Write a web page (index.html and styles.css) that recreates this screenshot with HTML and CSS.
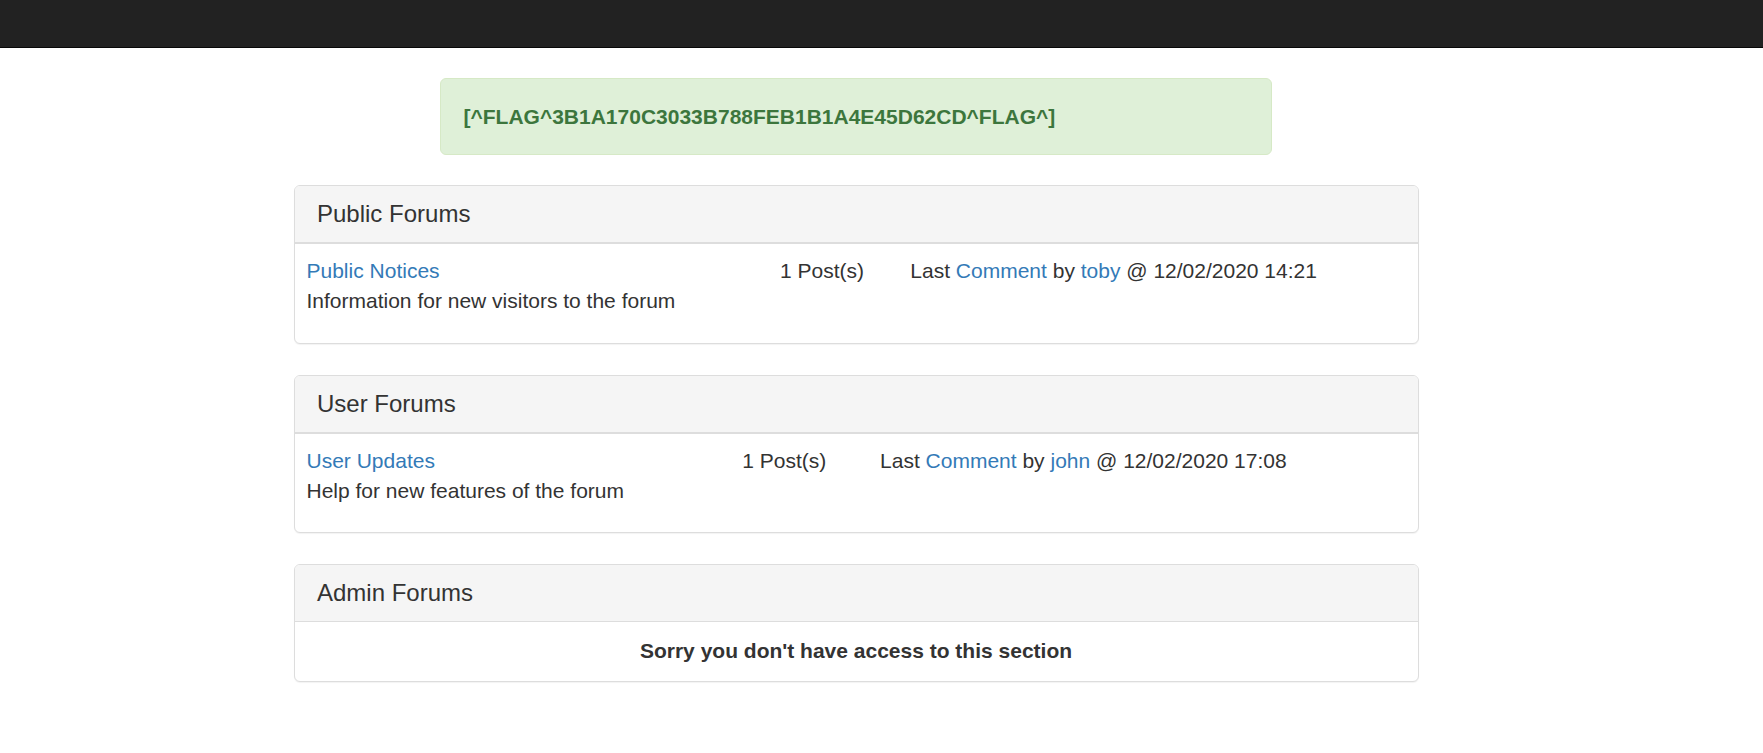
FILE: index.html
```html
<!DOCTYPE html>
<html lang="en">
<head>
<meta charset="utf-8">
<title>Forums</title>
<link rel="stylesheet" href="styles.css">
</head>
<body>
<nav class="navbar"></nav>
<main class="main">
  <div class="container">
    <div class="alert">[^FLAG^3B1A170C3033B788FEB1B1A4E45D62CD^FLAG^]</div>

    <section class="panel">
      <div class="panel-heading"><h3 class="panel-title">Public Forums</h3></div>
      <table class="forum-table">
        <tr>
          <td><a href="#">Public Notices</a><p class="desc">Information for new visitors to the forum</p></td>
          <td>1 Post(s)</td>
          <td>Last <a href="#">Comment</a> by <a href="#">toby</a> @ 12/02/2020 14:21</td>
        </tr>
      </table>
    </section>

    <section class="panel">
      <div class="panel-heading"><h3 class="panel-title">User Forums</h3></div>
      <table class="forum-table">
        <tr>
          <td><a href="#">User Updates</a><p class="desc">Help for new features of the forum</p></td>
          <td>1 Post(s)</td>
          <td>Last <a href="#">Comment</a> by <a href="#">john</a> @ 12/02/2020 17:08</td>
        </tr>
      </table>
    </section>

    <section class="panel">
      <div class="panel-heading"><h3 class="panel-title">Admin Forums</h3></div>
      <div class="panel-body denied">Sorry you don't have access to this section</div>
    </section>
  </div>
</main>
</body>
</html>
```

FILE: styles.css
```css
* { box-sizing: border-box; }

html, body {
  margin: 0;
  padding: 0;
  background: #fff;
}

body {
  font-family: "Liberation Sans", Arial, Helvetica, sans-serif;
  font-size: 21px;
  line-height: 30px;
  color: #333;
}

a {
  color: #337ab7;
  text-decoration: none;
}

.navbar {
  height: 48px;
  background: #222;
  border-bottom: 1px solid #080808;
}

.main {
  width: 1712px;
  padding-top: 30px;
}

.container {
  width: 1125px;
  margin: 0 auto;
}

.alert {
  width: 832px;
  margin: 0 auto 30px;
  padding: 22.5px;
  background: #dff0d8;
  border: 1px solid #d6e9c6;
  border-radius: 6px;
  color: #3c763d;
  font-weight: bold;
}

.panel {
  background: #fff;
  border: 1px solid #ddd;
  border-radius: 6px;
  box-shadow: 0 1px 1px rgba(0, 0, 0, 0.05);
  margin-bottom: 31px;
  overflow: hidden;
}

.panel-heading {
  background: #f5f5f5;
  border-bottom: 1px solid #ddd;
  padding: 15px 22.5px;
}

.panel-title {
  margin: 0;
  font-size: 24px;
  font-weight: normal;
  line-height: 26px;
  color: #333;
}

.forum-table {
  width: 100%;
  border-collapse: collapse;
}

.forum-table td {
  padding: 12px;
  vertical-align: top;
  text-align: left;
  border-top: 1px solid #ddd;
}

.desc {
  margin: 0 0 14.5px;
}

.panel-body.denied {
  padding: 14px 12px 15px;
  text-align: center;
  font-weight: bold;
}
```
